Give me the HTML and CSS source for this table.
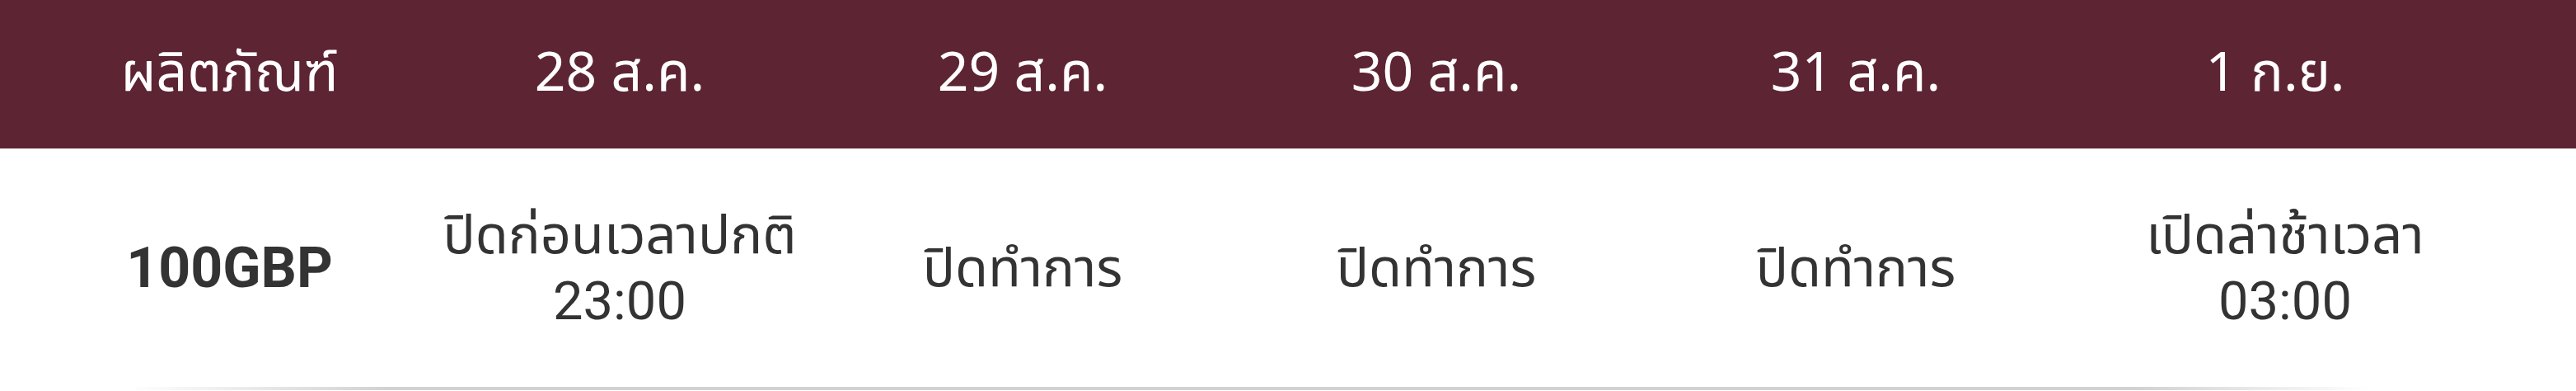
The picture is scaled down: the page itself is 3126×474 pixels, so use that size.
FILE: index.html
```html
<!DOCTYPE html>
<html lang="th">
<head>
<meta charset="utf-8">
<title>ตารางเวลาทำการ</title>
<link rel="stylesheet" href="styles.css">
</head>
<body>
<div class="schedule">
  <div class="row head">
    <div class="cell first">ผลิตภัณฑ์</div>
    <div class="cell">28 ส.ค.</div>
    <div class="cell">29 ส.ค.</div>
    <div class="cell">30 ส.ค.</div>
    <div class="cell">31 ส.ค.</div>
    <div class="cell">1 ก.ย.</div>
  </div>
  <div class="row body">
    <div class="cell first product">100GBP</div>
    <div class="cell">ปิดก่อนเวลาปกติ<br>23:00</div>
    <div class="cell">ปิดทำการ</div>
    <div class="cell">ปิดทำการ</div>
    <div class="cell">ปิดทำการ</div>
    <div class="cell last">เปิดล่าช้าเวลา<br>03:00</div>
  </div>
  <div class="shadow"></div>
</div>
</body>
</html>
```

FILE: styles.css
```css
html, body {
  margin: 0;
  padding: 0;
  background: #ffffff;
}

body {
  font-family: Roboto, "Noto Sans Thai", "Noto Sans Thai UI", "Noto Sans", sans-serif;
  width: 3126px;
  height: 474px;
  overflow: hidden;
}

.schedule {
  display: flex;
  flex-direction: column;
}

.row {
  display: grid;
  grid-template-columns: 511px 482px 496px 508px 510px 508px;
  align-items: center;
}

.head {
  background: #5d2433;
  color: #ffffff;
  height: 180px;
  font-family: "Noto Sans Thai", "Noto Sans Thai UI", "Noto Sans", sans-serif;
  font-size: 66px;
}

.body {
  height: 289px;
  color: #333333;
  font-size: 65px;
  line-height: 80px;
}

.cell {
  text-align: center;
  white-space: nowrap;
}

.cell.first {
  padding-left: 46px;
}

.body .cell.last {
  padding-left: 24px;
}

.product {
  font-weight: 700;
  font-size: 68px;
  font-family: Roboto, "Noto Sans", sans-serif;
}

.shadow {
  height: 4px;
  background: linear-gradient(to right,
    rgba(208, 208, 210, 0) 5%,
    #d2d2d4 15%,
    #d2d2d4 83%,
    rgba(208, 208, 210, 0) 92%);
}
```
